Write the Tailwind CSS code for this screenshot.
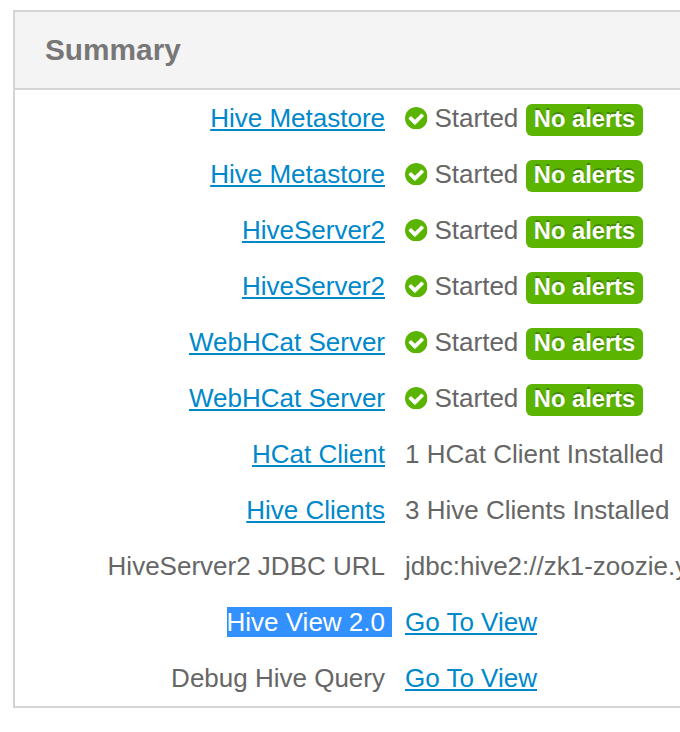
<!DOCTYPE html>
<html lang="en"><head><meta charset="utf-8"><title>Summary</title>
<script src="https://cdn.jsdelivr.net/npm/@tailwindcss/browser@4"></script></head>
<body class="bg-white h-[732px] overflow-hidden font-['Liberation_Sans',Arial,sans-serif] text-[26px] leading-[40px] text-[#666]">
<svg class="hidden"><symbol id="ok" viewBox="0 0 1536 1536"><path fill="#5ab400" d="M1284 606q0-28-18-46l-91-90q-19-19-45-19t-45 19L677 877 451 651q-19-19-45-19t-45 19l-91 90q-18 18-18 46 0 27 18 45l362 362q19 19 45 19 27 0 46-19l543-543q18-18 18-45zm252 162q0 209-103 385.5T1153.5 1433 768 1536t-385.500-103T103 1153.500 0 768t103-385.500T382.500 103 768 0t385.500 103T1433 382.500 1536 768z"/></symbol></svg>
<main class="mt-[10px] ml-[13px] h-[698px] border-2 border-r-0 border-[#d4d4d4] overflow-hidden">
<h1 class="h-[78px] bg-[#f4f4f4] border-b-2 border-[#d4d4d4] pl-[30px] pt-[18px] text-[29.8px] font-bold text-[#777]">Summary</h1>
<dl id="rows" class="pt-2"></dl>
</main>
<script>
const link = t => `<a href="#" class="text-[#0088cc] underline decoration-2 underline-offset-[2px]">${t}</a>`;
const started = `<svg class="size-[22.5px] mr-[7px]"><use href="#ok"/></svg><span class="w-[83px]">Started</span><span class="ml-[8.500px] mt-[3px] h-[32px] w-[117px] rounded-[6px] bg-[#5ab400] text-white text-center font-bold text-[23.7px] leading-[30px] [text-shadow:0_-2px_0_rgba(0,0,0,.25)]">No alerts</span>`;
const rows = [
...['Hive Metastore','Hive Metastore','HiveServer2','HiveServer2','WebHCat Server','WebHCat Server'].map(n => [link(n), started]),
[link('HCat Client'),'1 HCat Client Installed'],
[link('Hive Clients'),'3 Hive Clients Installed'],
['HiveServer2 JDBC URL','jdbc:hive2://zk1-zoozie.y'],
['<span class="inline-block h-[30px] leading-[30px] pr-[7px] -mr-[7px] bg-[#3390ff] text-white">Hive View 2.0</span>', link('Go To View')],
['Debug Hive Query', link('Go To View')]];
document.getElementById('rows').innerHTML = rows.map(([a,b]) => `<div class="flex h-[56px] whitespace-nowrap"><dt class="w-[370px] shrink-0 text-right">${a}</dt><dd class="ml-[20px] h-10 flex items-center">${b}</dd></div>`).join('');
</script></body></html>
